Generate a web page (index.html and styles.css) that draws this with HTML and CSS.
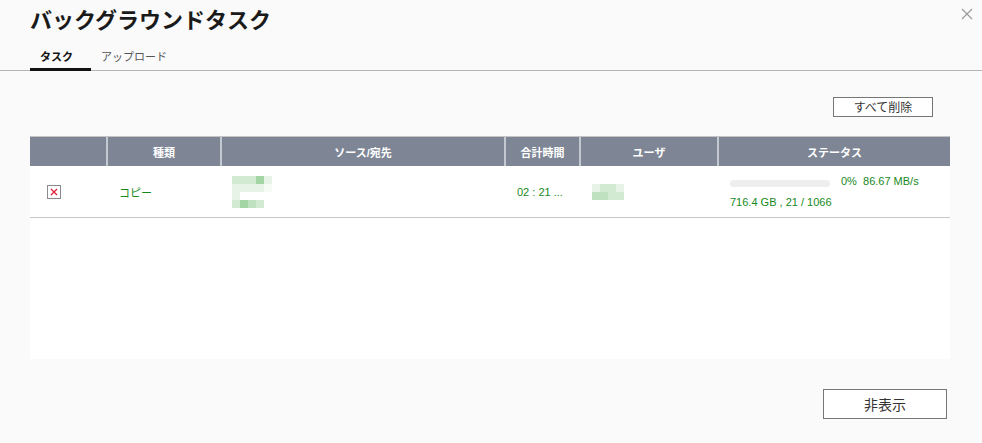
FILE: index.html
```html
<!DOCTYPE html>
<html>
    <head>
        <meta charset="utf-8" />
        <title>バックグラウンドタスク</title>
        <link rel="stylesheet" href="styles.css">
    </head>
    <body>
        <div class="dialog">
            <h1 class="title">バックグラウンドタスク</h1>
            <button class="close" title="閉じる">
                <svg width="12" height="12" viewBox="0 0 12 12"><path d="M1 1 L11 11 M11 1 L1 11" stroke="#9a9a9a" stroke-width="1.2" fill="none"/></svg>
            </button>

            <div class="tabs">
                <span class="tab active">タスク</span>
                <span class="tab">アップロード</span>
            </div>

            <div class="content">
                <div class="toolbar">
                    <button class="btn btn-small">すべて削除</button>
                </div>

                <div class="grid">
                    <table>
                        <colgroup>
                            <col class="c-del">
                            <col class="c-type">
                            <col class="c-src">
                            <col class="c-time">
                            <col class="c-user">
                            <col class="c-status">
                        </colgroup>
                        <thead>
                            <tr>
                                <th></th>
                                <th>種類</th>
                                <th>ソース/宛先</th>
                                <th>合計時間</th>
                                <th>ユーザ</th>
                                <th>ステータス</th>
                            </tr>
                        </thead>
                        <tbody>
                            <tr>
                                <td class="del">
                                    <svg width="14" height="14" viewBox="0 0 14 14"><rect x="0.5" y="0.5" width="13" height="13" fill="#fff" stroke="#8a8a8a"/><path d="M4 4 L10 10 M10 4 L4 10" stroke="#e0203a" stroke-width="1.3"/></svg>
                                </td>
                                <td class="ok">コピー</td>
                                <td>
                                    <div class="mosaic src">
                                        <i class="m2"></i><i class="m2"></i><i class="m2"></i><i class="m4"></i><i class="m1"></i>
                                        <i class="m1"></i><i class="m1"></i><i class="m1"></i><i class="m1"></i><i class="m0"></i>
                                        <i class="m1"></i><i></i><i></i><i></i><i></i>
                                        <i class="m2"></i><i class="m4"></i><i class="m3"></i><i class="m2"></i><i></i>
                                    </div>
                                </td>
                                <td class="ok num">02 : 21 ...</td>
                                <td>
                                    <div class="mosaic user">
                                        <i class="m1"></i><i class="m2"></i><i class="m2"></i><i class="m1"></i>
                                        <i class="m3"></i><i class="m3"></i><i class="m2"></i><i class="m2"></i>
                                    </div>
                                </td>
                                <td class="ok num">
                                    <div class="status-line">
                                        <div class="bar"><div class="fill" style="width: 0%"></div></div>
                                        <span>0%&nbsp;&nbsp;86.67 MB/s</span>
                                    </div>
                                    <div class="status-sub">716.4 GB , 21 / 1066</div>
                                </td>
                            </tr>
                        </tbody>
                    </table>
                </div>
            </div>

            <div class="footer">
                <button class="btn btn-large">非表示</button>
            </div>
        </div>
    </body>
</html>
```

FILE: styles.css
```css
body {
    margin: 0;
    padding: 0;
    background-color: #fafafa;
    font-family: "Liberation Sans", "Noto Sans CJK JP", sans-serif;
    color: #222222;
}

.dialog {
    position: relative;
    height: 443px;
}

.title {
    margin: 0;
    padding: 7px 0 0 30px;
    font-size: 22px;
    line-height: 28px;
    font-weight: bold;
    color: #1a1a1a;
}

.close {
    position: absolute;
    top: 8px;
    right: 8px;
    width: 14px;
    height: 14px;
    padding: 0;
    border: none;
    background: none;
}

.tabs {
    display: flex;
    margin-top: 11px;
    padding-left: 30px;
    border-bottom: 1px solid #b4b4b4;
    height: 24px;
}

.tab {
    padding: 0 10px;
    font-size: 11px;
    line-height: 22px;
    color: #555555;
}

.tab.active {
    color: #111111;
    font-weight: bold;
    border-bottom: 3px solid #111111;
    margin-bottom: -1px;
    width: 41px;
}

.content {
    padding: 26px 32px 0 30px;
}

.toolbar {
    display: flex;
    justify-content: flex-end;
    padding-right: 17px;
}

.btn {
    background: #ffffff;
    border: 1px solid #767676;
    color: #333333;
    font-family: "Noto Sans CJK JP", sans-serif;
    padding: 0;
}

.btn-small {
    width: 100px;
    height: 20px;
    font-size: 12px;
    line-height: 18px;
}

.btn-large {
    width: 124px;
    height: 30px;
    font-size: 14px;
    border-width: 1.5px;
}

.grid {
    margin-top: 19px;
    background: #ffffff;
    height: 222px;
    border-top: 1px solid #c4c4c4;
}

table {
    width: 100%;
    table-layout: fixed;
    border-collapse: collapse;
}

.c-del { width: 77px; }
.c-type { width: 114px; }
.c-src { width: 284px; }
.c-time { width: 75px; }
.c-user { width: 138px; }

th {
    background: #7e8696;
    color: #ffffff;
    height: 29px;
    padding: 0;
    font-size: 11px;
    font-weight: bold;
    border-left: 2px solid #c3c7cf;
    box-shadow: inset 0 1px 0 #7e8696;
}

th:first-child {
    border-left: none;
}

td {
    height: 51px;
    padding: 0 0 0 12px;
    border-bottom: 1px solid #c8c8c8;
    font-size: 11px;
    vertical-align: middle;
}

td.del {
    padding-left: 17px;
    line-height: 0;
}

.ok {
    color: #17891b;
}

.num {
    font-family: "Liberation Sans", sans-serif;
}

.mosaic {
    display: grid;
    grid-template-columns: repeat(5, 8px);
    grid-auto-rows: 8px;
}

.mosaic.src {
    margin-left: -1px;
}

.mosaic.user {
    grid-template-columns: repeat(4, 8px);
}

.m0 { background: #f6fbf6; }
.m1 { background: #e6f3e6; }
.m2 { background: #d2ead2; }
.m3 { background: #bfe1bf; }
.m4 { background: #a3d4a3; }

.status-line {
    display: flex;
    align-items: center;
    gap: 11px;
    height: 14px;
}

.bar {
    width: 100px;
    height: 7px;
    border-radius: 4px;
    background: #eeeeee;
    margin-top: 4px;
}

.fill {
    height: 100%;
    border-radius: 4px;
    background: #17891b;
}

.status-sub {
    margin-top: 7px;
    line-height: 14px;
}

.footer {
    display: flex;
    justify-content: flex-end;
    padding: 30px 35px 0 0;
}
```
